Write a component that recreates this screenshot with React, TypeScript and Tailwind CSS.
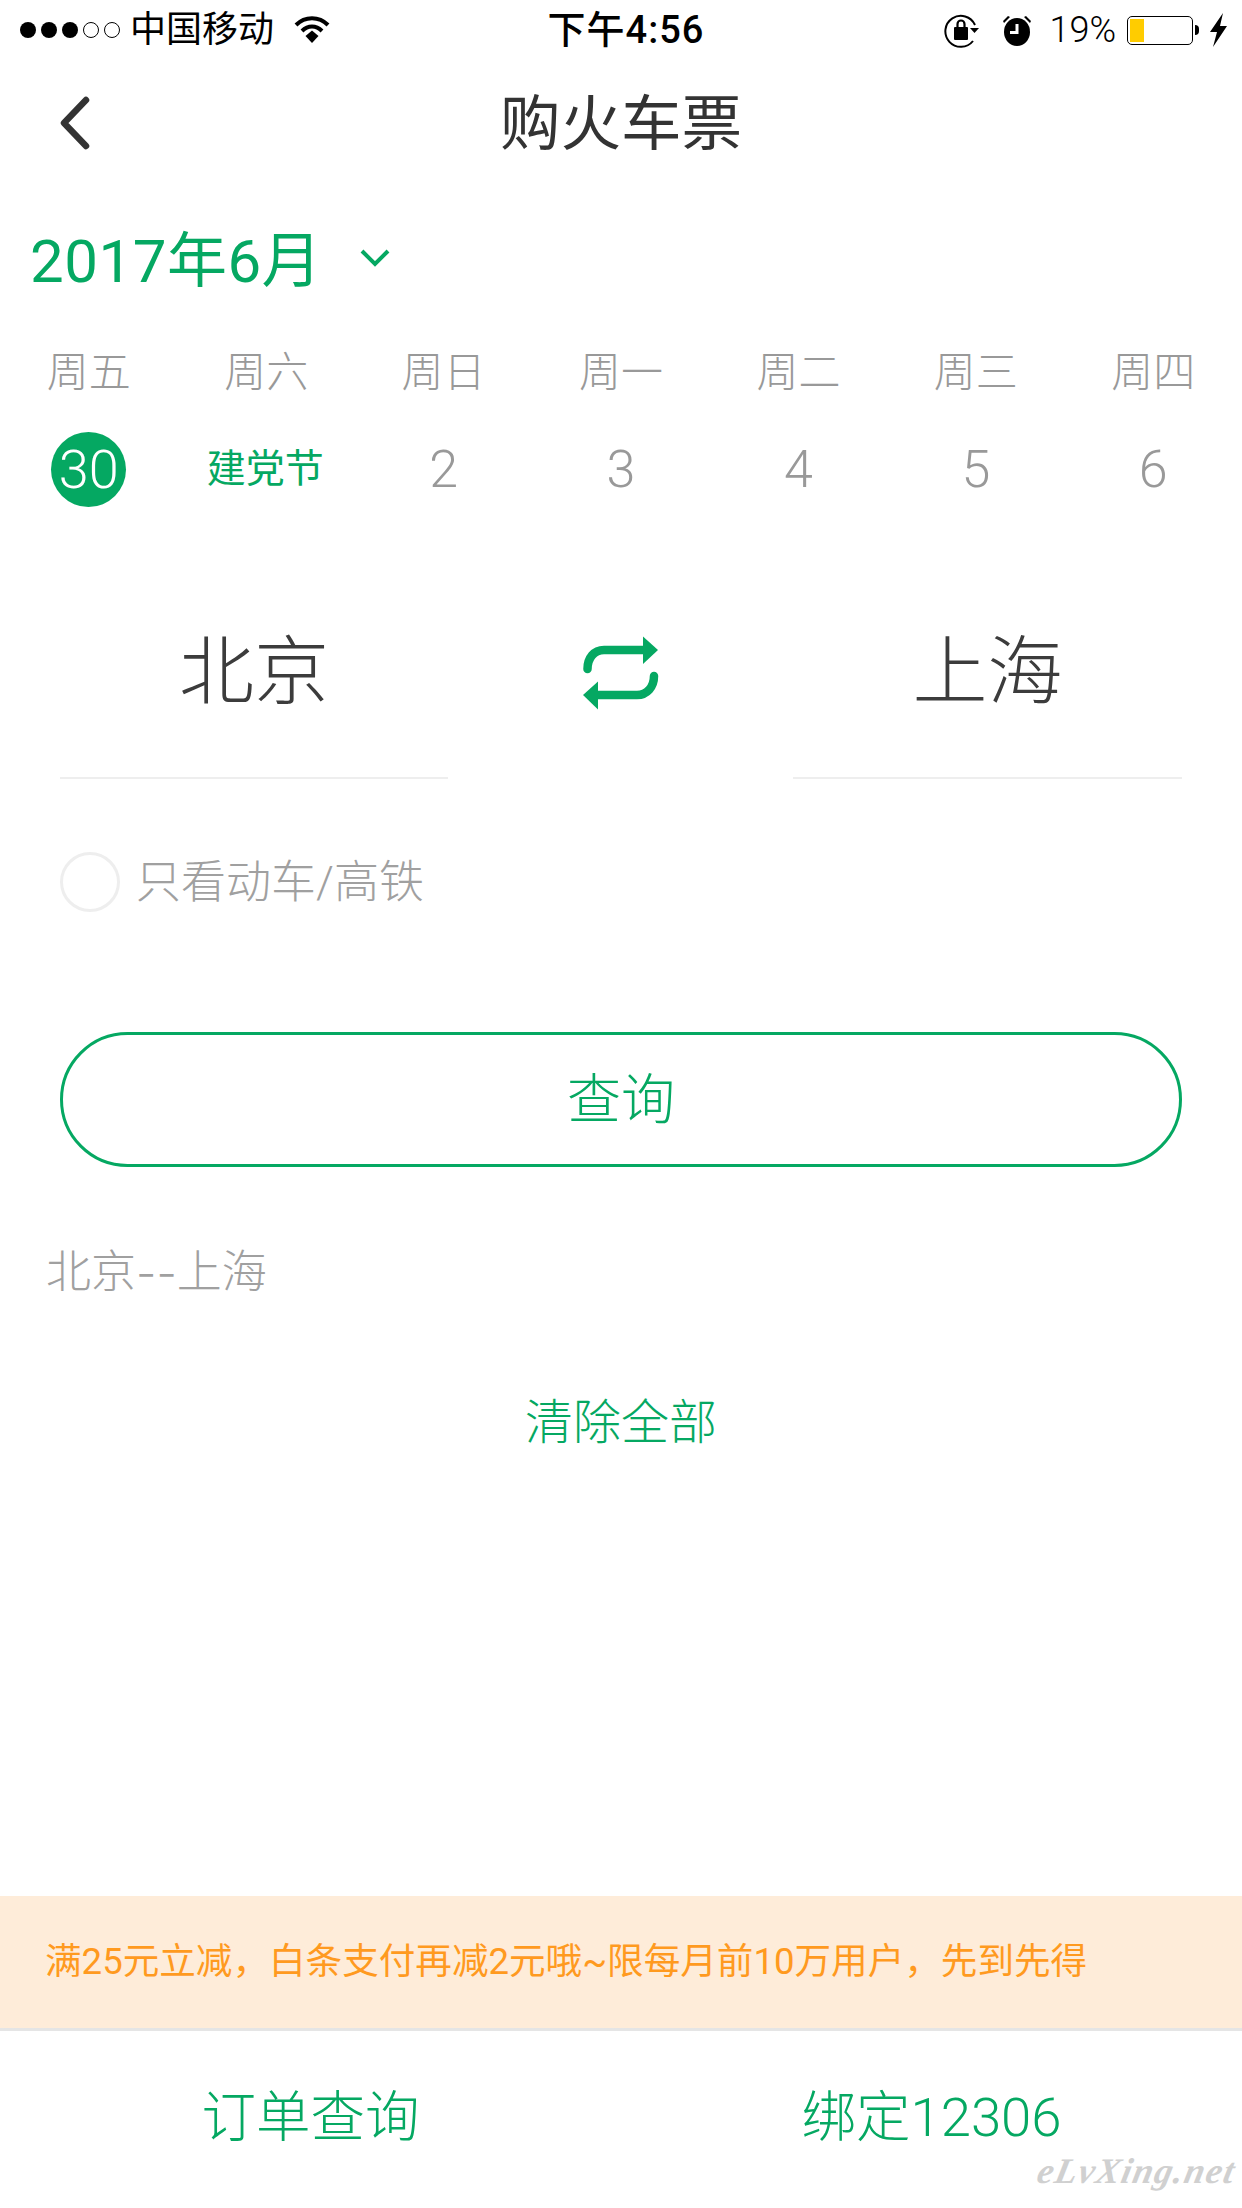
import React from "react";

const days = ["周五", "周六", "周日", "周一", "周二", "周三", "周四"];

function Wifi() {
  return (
    <svg width="36" height="30" viewBox="0 0 36 30" fill="none" stroke="#000" strokeWidth="4">
      <path d="M2 10 C11 1 25 1 34 10" />
      <path d="M8 16 C14 10 22 10 28 16" />
      <path d="M11.5 21 L18 15.5 L24.5 21 L18 28 Z" fill="#000" stroke="none" />
    </svg>
  );
}

function RotationLock() {
  return (
    <svg width="36" height="36" viewBox="0 0 36 36" fill="none">
      <path d="M31 13 A15.5 15.5 0 1 0 29 29" stroke="#000" strokeWidth="2" />
      <path d="M26 16 L35 16 L30.5 21 Z" fill="#000" />
      <rect x="10" y="15" width="14" height="13" rx="1" fill="#000" />
      <path d="M13.5 15 V12 a3.5 3.5 0 0 1 7 0 V15" stroke="#000" strokeWidth="2.2" />
    </svg>
  );
}

function Alarm() {
  return (
    <svg width="30" height="32" viewBox="0 0 30 32" fill="none">
      <ellipse cx="15" cy="18" rx="13" ry="14" fill="#000" />
      <path d="M1 7 L6 2 L8 3 L2 9 Z M29 7 L24 2 L22 3 L28 9 Z" fill="#000" />
      <path d="M15 10 V18.5 H8" stroke="#fff" strokeWidth="3" />
    </svg>
  );
}

function Bolt() {
  return (
    <svg width="17" height="34" viewBox="0 0 17 34" fill="#000">
      <path d="M13 0 L0 19 L7 19 L3 34 L17 13 L10 13 Z" />
    </svg>
  );
}

function Swap() {
  return (
    <svg width="76" height="74" viewBox="0 0 76 74" fill="none">
      <path d="M4.5 33 C4.5 22 11 14 21 14 L61 14" stroke="#05a862" strokeWidth="8.5" strokeLinecap="round" />
      <path d="M60 0.5 L75 14 L60 28 Z" fill="#05a862" />
      <path d="M71 40 C71 51 64 59 54 59 L14 59" stroke="#05a862" strokeWidth="8.5" strokeLinecap="round" />
      <path d="M15 45.5 L0 59 L15 73.5 Z" fill="#05a862" />
    </svg>
  );
}

export default function App() {
  return (
    <div className="w-[1242px] h-[2208px] bg-white flex flex-col overflow-hidden font-light font-['Roboto','Noto_Sans_CJK_SC',sans-serif]">
      {/* status bar */}
      <div className="h-[60px] shrink-0 grid grid-cols-[1fr_auto_1fr] items-center text-black">
        <div className="flex items-center pl-[20px]">
          <div className="flex gap-[5px]">
            <span className="w-[16px] h-[16px] rounded-full bg-black" />
            <span className="w-[16px] h-[16px] rounded-full bg-black" />
            <span className="w-[16px] h-[16px] rounded-full bg-black" />
            <span className="w-[16px] h-[16px] rounded-full border border-black" />
            <span className="w-[16px] h-[16px] rounded-full border border-black" />
          </div>
          <span className="ml-[10px] text-[36px] leading-none font-normal">中国移动</span>
          <span className="ml-[20px] flex"><Wifi /></span>
        </div>
        <div className="ml-[10px] text-[38px] tracking-[1px] leading-none font-medium">下午4:56</div>
        <div className="flex items-center justify-end pr-[15px]">
          <RotationLock />
          <span className="ml-[22px] flex"><Alarm /></span>
          <span className="ml-[17px] text-[36px] leading-none font-light">19%</span>
          <div className="ml-[11px] w-[66px] h-[29px] border border-black rounded-[5px] p-[2px] flex">
            <div className="w-[14px] bg-[#ffcc00]" />
          </div>
          <div className="ml-[2px] w-[4px] h-[10px] bg-black rounded-r-full" />
          <span className="ml-[11px] flex"><Bolt /></span>
        </div>
      </div>

      {/* nav */}
      <div className="relative h-[128px] shrink-0 flex items-center justify-center pt-[2px]">
        <svg className="absolute left-[58px] top-[36px]" width="34" height="54" viewBox="0 0 34 54" fill="none">
          <path d="M28 4 L6 27 L28 50" stroke="#333" strokeWidth="6.5" strokeLinecap="round" strokeLinejoin="round" />
        </svg>
        <span className="text-[60.5px] leading-none font-normal text-[#333]">购火车票</span>
      </div>

      {/* month */}
      <div className="h-[144px] shrink-0 flex items-center pl-[30px] text-[#05a862]">
        <span className="text-[60px] leading-none tracking-[0.5px] font-normal mt-[4px]">2017年6月</span>
        <svg className="ml-[37px] mb-[4px]" width="32" height="20" viewBox="0 0 32 20" fill="none">
          <path d="M3 3 L16 16 L29 3" stroke="#05a862" strokeWidth="4" />
        </svg>
      </div>

      {/* weekdays */}
      <div className="h-[82px] shrink-0 grid grid-cols-7 items-center text-center text-[42px] leading-none text-[#999]">
        {days.map((d) => (
          <div key={d}>{d}</div>
        ))}
      </div>

      {/* dates */}
      <div className="h-[111px] shrink-0 grid grid-cols-7 items-center justify-items-center text-[52px] leading-none font-light text-[#999]">
        <div className="w-[75px] h-[75px] rounded-full bg-[#05a862] text-white text-[54px] flex items-center justify-center">30</div>
        <div className="text-[39px] font-normal text-[#05a862] pr-[2px]">建党节</div>
        <div>2</div>
        <div>3</div>
        <div>4</div>
        <div>5</div>
        <div>6</div>
      </div>

      {/* cities */}
      <div className="mt-[42px] h-[212px] shrink-0 flex items-stretch px-[60px]">
        <div className="w-[388px] border-b-2 border-[#eeeeee] flex items-center justify-center text-[75px] leading-none text-[#3c3c3c]">北京</div>
        <div className="flex-1 flex items-center justify-center">
          <Swap />
        </div>
        <div className="w-[389px] border-b-2 border-[#eeeeee] flex items-center justify-center text-[75px] leading-none text-[#3c3c3c]">上海</div>
      </div>

      {/* option */}
      <div className="mt-[73px] shrink-0 flex items-center pl-[60px]">
        <span className="w-[60px] h-[60px] rounded-full border-[3px] border-[#eeeeee]" />
        <span className="ml-[16px] text-[45px] leading-none text-[#a0a0a0]">只看动车/高铁</span>
      </div>

      {/* query button */}
      <div className="mt-[120px] mx-[60px] h-[135px] shrink-0 rounded-full border-[3px] border-[#05a862] flex items-center justify-center pt-[3px] text-[54px] leading-none text-[#05a862]">
        查询
      </div>

      {/* history */}
      <div className="mt-[75px] h-[60px] shrink-0 flex items-center pl-[46px] text-[45px] leading-none text-[#a0a0a0]">
        北京<span className="font-['Inter',sans-serif]">--</span>上海
      </div>

      {/* clear */}
      <div className="mt-[91px] h-[60px] shrink-0 flex items-center justify-center text-[48px] leading-none text-[#05a862]">清除全部</div>

      <div className="flex-1" />

      {/* banner */}
      <div className="h-[132px] shrink-0 bg-[#feecd9] flex items-center pl-[45px] text-[36.6px] leading-none font-normal text-[#ff9a1f] whitespace-nowrap">
        满25元立减，白条支付再减2元哦~限每月前10万用户，先到先得
      </div>

      {/* bottom bar */}
      <div className="relative h-[180px] shrink-0 border-t-[3px] border-[#e5e5e5] grid grid-cols-2 items-center justify-items-center pb-[4px] text-[54.5px] leading-none text-[#05a862]">
        <div>订单查询</div>
        <div>绑定12306</div>
        <span className="absolute left-[1038px] top-[122px] text-[36px] leading-none italic font-bold font-['Liberation_Serif',serif] tracking-[1.5px] text-[#d0d0d0] -skew-x-12">eLvXing.net</span>
      </div>
    </div>
  );
}
